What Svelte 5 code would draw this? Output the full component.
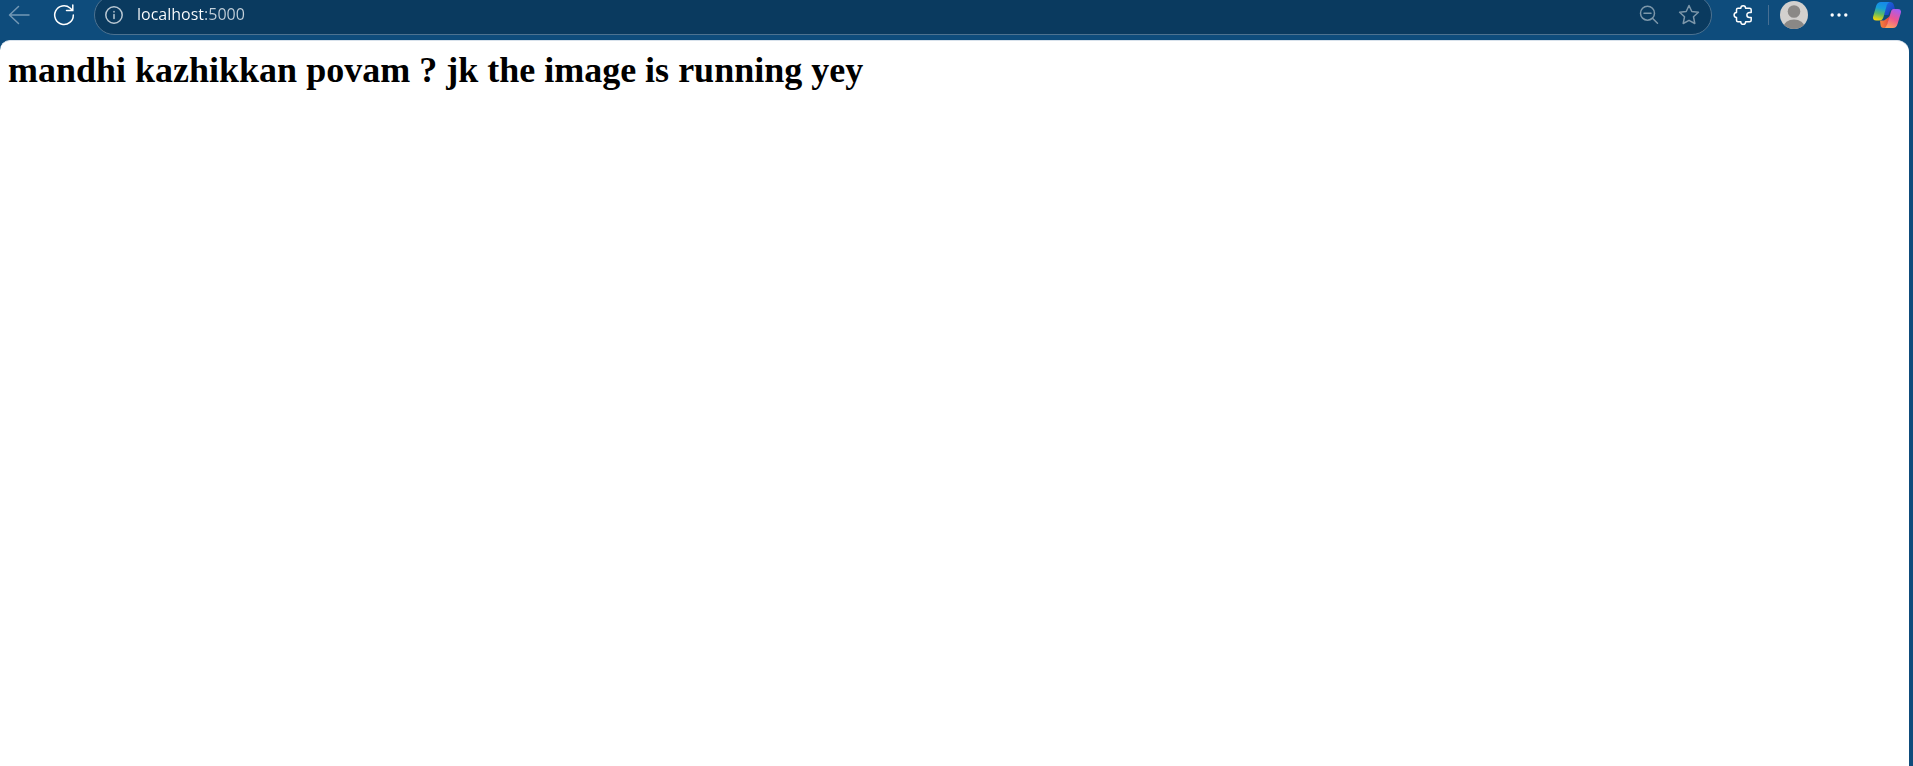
<script>
  let address = $state('localhost:5000');
</script>

<div class="browser">
  <header>
    <button class="back" aria-label="Back">
      <svg width="22" height="20" viewBox="0 0 22 20"><path d="M21 10H2M10.500 1.500 1.500 10l9 8.500" /></svg>
    </button>
    <button class="reload" aria-label="Reload">
      <svg width="22" height="22" viewBox="0 0 22 22"><path d="M20.300 11a9.300 9.300 0 1 1-3.300-7L19.500 6.300M19.800 1v5.500H13.500" /></svg>
    </button>
    <form class="bar" onsubmit={(e) => e.preventDefault()}>
      <button type="button" class="info" aria-label="Site information">
        <svg width="18" height="18" viewBox="0 0 18 18"><circle cx="9" cy="9" r="8.200" /><path d="M9 8.500v4M9 5.500v.6" /></svg>
      </button>
      <input type="text" aria-label="Address" bind:value={address} spellcheck="false" />
      <button type="button" class="dim" aria-label="Zoom out">
        <svg width="20" height="20" viewBox="0 0 20 20"><circle cx="8.500" cy="8.200" r="7" /><path d="M5 8.200h7M13.500 13.200l5 5" /></svg>
      </button>
      <button type="button" class="star" aria-label="Add to favorites">
        <svg width="22" height="22" viewBox="0 0 22 22"><path d="M11 1.500l2.800 6 6.600.8-4.900 4.500 1.300 6.700L11 16.300l-5.800 3.200 1.300-6.700L1.600 8.300l6.600-.8z" /></svg>
      </button>
    </form>
    <button class="extensions" aria-label="Extensions">
      <svg width="20" height="22" viewBox="0 0 20 22"><path d="M5 4.300h2.800C7.800 2.500 8.700 1.700 10.200 1.700s2.400.8 2.400 2.600h3.900q1.700 0 1.700 1.500v2.700h-1.700c-1.700 0-2.600 1-2.600 2.500s.9 2.500 2.600 2.500h1.700v2.700q0 1.500-1.700 1.500h-3.900c0 1.800-.9 2.600-2.400 2.600s-2.400-.8-2.400-2.600H5q-1.500 0-1.500-1.500v-2.700C1.900 13.300 1.100 12.500 1.100 11s.8-2.300 2.400-2.500V5.800q0-1.500 1.500-1.500z" /></svg>
    </button>
    <span class="divider"></span>
    <button class="profile" aria-label="Profile">
      <svg width="28" height="28" viewBox="0 0 28 28">
        <defs><clipPath id="face"><circle cx="14" cy="14" r="14" /></clipPath></defs>
        <g clip-path="url(#face)" stroke="none">
          <path d="M0 0h28v28H0z" fill="#d2d0ce" />
          <circle cx="14" cy="10.500" r="6.300" fill="#8a8886" />
          <ellipse cx="14" cy="26" rx="10.500" ry="7.500" fill="#8a8886" />
        </g>
      </svg>
    </button>
    <button class="more" aria-label="Settings and more">
      <svg width="18" height="4" viewBox="0 0 18 4"><g fill="#fff" stroke="none"><circle cx="2.200" cy="2" r="1.700" /><circle cx="9" cy="2" r="1.700" /><circle cx="15.800" cy="2" r="1.700" /></g></svg>
    </button>
    <button class="copilot" aria-label="Copilot">
      <svg width="28" height="26" viewBox="0 0 28 26">
        <defs>
          <linearGradient id="cool" x1=".6" y1="0" x2=".4" y2="1"><stop offset="0" stop-color="#1688ea" /><stop offset=".35" stop-color="#169fd8" /><stop offset=".65" stop-color="#5cba66" /><stop offset="1" stop-color="#f3d60a" /></linearGradient>
          <linearGradient id="warm" x1=".7" y1="0" x2=".3" y2="1"><stop offset="0" stop-color="#a75cf2" /><stop offset=".5" stop-color="#ed5593" /><stop offset="1" stop-color="#ffa35b" /></linearGradient>
          <linearGradient id="fold" x1="0" y1="0" x2="1" y2="1"><stop offset="0" stop-color="#1a70e0" /><stop offset="1" stop-color="#1b35bd" /></linearGradient>
          <linearGradient id="base" x1="0" y1="0" x2="1" y2="0"><stop offset="0" stop-color="#f4863c" /><stop offset="1" stop-color="#e54540" /></linearGradient>
        </defs>
        <g stroke="none">
          <path d="M14 0h3.500q2.500 0 3.200 2.500L22 7h-2q-2.500 0-3.500 3l-1 3H11z" fill="url(#fold)" />
          <path d="M7 18.500h4L14.500 16 17 14l-2.500 8.500Q13.500 26 10.500 26q-2.500 0-3-3.300z" fill="url(#base)" />
          <path d="M8 0h8.500q-2 .8-2.800 3.500L10.500 15q-1 3.500-4.500 3.500H3q-4 0-2.700-4.500l3-10.500Q4.500 0 8 0z" fill="url(#cool)" />
          <path d="M20.500 7H25q4 0 2.700 4.500l-3 10Q23.500 26 20 26h-9q2.300-.8 3.200-3.800l3.600-12Q18.600 7 20.500 7z" fill="url(#warm)" />
        </g>
      </svg>
    </button>
  </header>
  <main>
    <h1>mandhi kazhikkan povam ? jk the image is running yey</h1>
  </main>
</div>

<style>
  :global(body) {
    margin: 0;
    background: #0e4c7c;
  }
  .browser {
    box-sizing: border-box;
    min-height: 100vh;
    display: flex;
    flex-direction: column;
    background: #0e4c7c;
    overflow: hidden;
  }
  header {
    display: flex;
    align-items: center;
    height: 30px;
    padding: 0 12px 10px 8px;
  }
  button {
    display: flex;
    flex: none;
    padding: 0;
    border: 0;
    background: none;
    color: #fff;
  }
  svg {
    display: block;
    fill: none;
    stroke: currentColor;
    stroke-width: 1.5;
    stroke-linejoin: round;
    stroke-linecap: round;
  }
  .back {
    color: #7398b5;
  }
  .reload {
    margin: 0 19px 0 23px;
  }
  .reload svg {
    stroke-linejoin: miter;
  }
  .bar {
    box-sizing: border-box;
    display: flex;
    flex: 1;
    align-items: center;
    height: 40px;
    padding: 0 11px 0 10px;
    border: 1px solid #4d7290;
    border-radius: 24px;
    background: #0a3a5f;
  }
  .info {
    color: #b9c7d2;
  }
  input {
    flex: 1;
    min-width: 0;
    height: 28px;
    margin: 0 14px;
    padding: 0 0 2px;
    box-sizing: border-box;
    border: 0;
    outline: 0;
    background: linear-gradient(90deg, #fff 68px, #c4d0da 68px);
    background-clip: text;
    color: transparent;
    caret-color: #fff;
    font: 16px "Open Sans", "Noto Sans", sans-serif;
  }
  .dim,
  .star {
    color: #7d97aa;
  }
  .star {
    margin-left: 19px;
  }
  .extensions {
    margin-left: 21px;
  }
  .divider {
    width: 1px;
    height: 20px;
    margin: 0 11px 0 15px;
    background: #476f93;
  }
  .more {
    margin: 0 25px 0 22px;
  }
  main {
    flex: 1;
    margin-right: 4px;
    padding: 8px;
    border-top: 1px solid #d8e2ec;
    border-radius: 10px 12px 0 0;
    background: #fff;
  }
  h1 {
    margin: 0;
    color: #000;
    font: bold 36px/42px "Liberation Serif", serif;
  }
</style>
